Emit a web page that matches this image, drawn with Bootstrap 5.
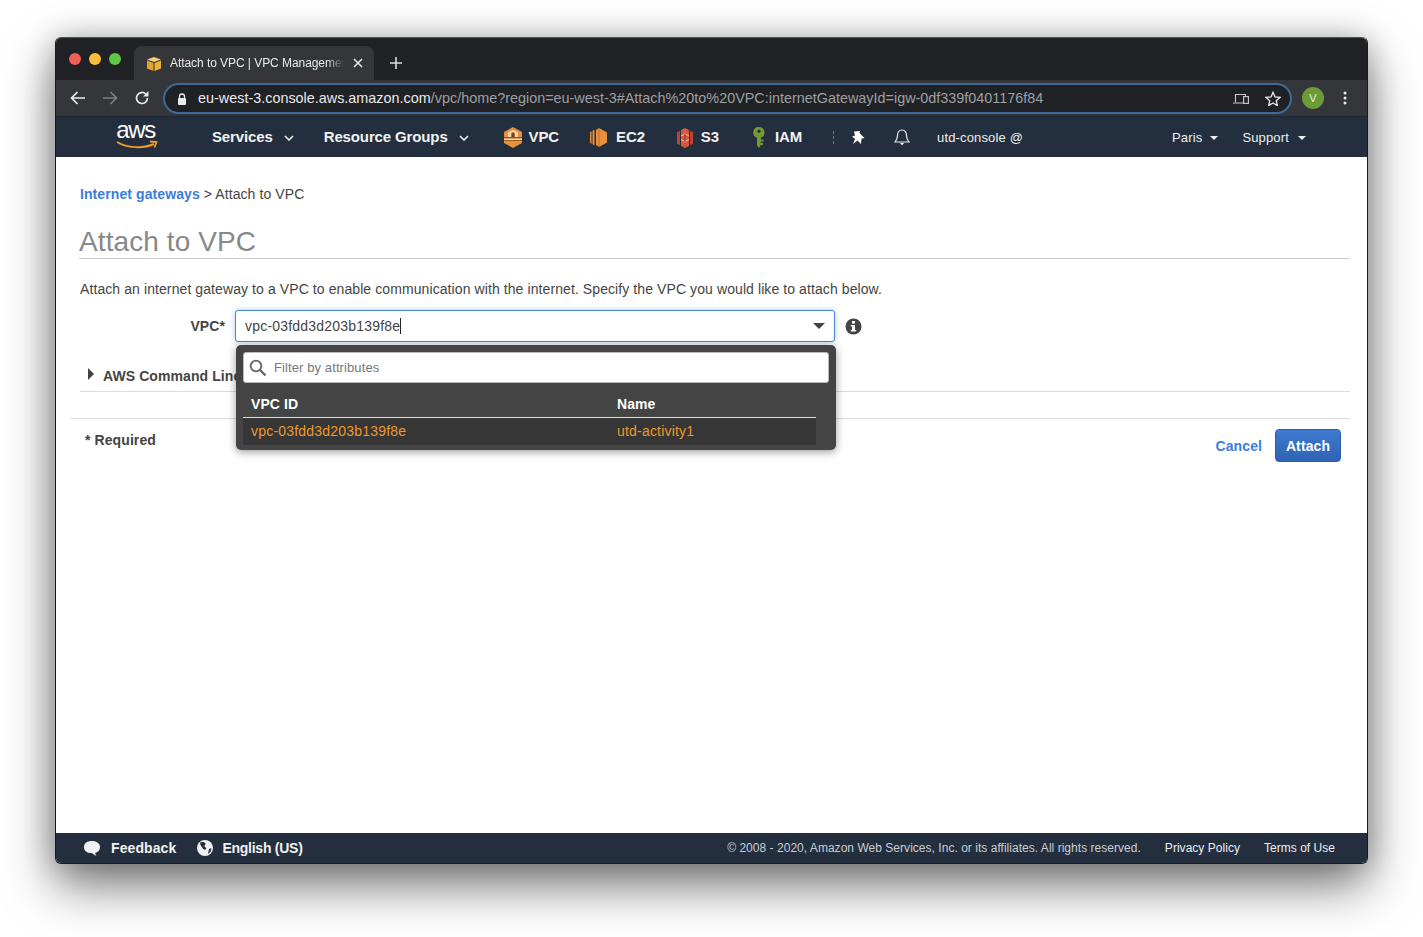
<!DOCTYPE html>
<html lang="en">
<head>
<meta charset="utf-8">
<title>Attach to VPC</title>
<link rel="stylesheet" href="https://cdn.jsdelivr.net/npm/bootstrap@5.3.0/dist/css/bootstrap.min.css">
<style>
html,body{height:937px;overflow:hidden;background:#fff}
body{font-family:"Liberation Sans",Arial,sans-serif;font-size:14px;color:#444;padding:37px 55px 73px 55px}
.win{height:827px;width:1313px;border:1px solid #1a1a1a;border-top-color:#555;border-radius:6px;overflow:hidden;box-shadow:0 22px 50px rgba(0,0,0,.52),0 0 30px rgba(0,0,0,.22);background:#fff}
.tabstrip{height:42px;background:#202124;flex:none}
.dots{padding:15px 0 0 13px;gap:8px;width:78px;flex:none}
.dot{width:12px;height:12px;border-radius:50%;display:block}
.tabx{width:240px;height:34px;margin-top:8px;background:#35363a;border-radius:8px 8px 0 0;padding:0 11px 0 12px;color:#e8eaed;font-size:12px;letter-spacing:-.06px;white-space:nowrap}
.tabtxt{width:174px;overflow:hidden;margin-left:8px;-webkit-mask-image:linear-gradient(90deg,#000 90%,transparent);mask-image:linear-gradient(90deg,#000 90%,transparent)}
.plus{margin:19px 0 0 16px}
.toolbar{height:36px;background:#35363a;flex:none;padding-left:14px}
.omni{width:1129px;height:31px;margin-left:13px;border:2px solid #3d6a99;border-radius:16px;background:#202124;padding:1px 9px 0 12px;font-size:14.4px;color:#9aa0a6;white-space:nowrap}
.omni b{font-weight:400;color:#e8eaed}
.urltxt{margin-left:11px}
.avatar{width:22px;height:22px;border-radius:50%;background:#6b9b37;color:#e8f2d8;font-size:11px;margin-left:10px}
.kebab{margin-left:19px}
.awsbar{height:41px;background:#232f3e;flex:none;color:#eee;white-space:nowrap;border-top:1px solid #1d2733;padding-top:1px}
.awslogo{margin-left:60px;width:42px}
.awsword{font-size:24px;line-height:20px;letter-spacing:-1.4px;color:#fff;margin-top:-6px;text-align:center;padding-right:3px}
.nvi{font-weight:700;font-size:15px;letter-spacing:-.13px;color:#f1f1f1}
.nvs{font-size:13px;letter-spacing:.15px;color:#eee}
.chev1{margin-left:9px}
.chev2{margin-left:9px}
.ngap0{margin-left:54px}
.ngap1{margin-left:26px}
.ngap2{margin-left:31px}
.ngap3{margin-left:7px}
.ngap4{margin-left:31px}
.ngap5{margin-left:9px}
.ngap5b{margin-left:8px}
.ngap6{margin-left:32px}
.ngap7{margin-left:34px}
.ngap8{margin-left:10px}
.sep{margin-left:31px;width:1px;height:13px;border-left:1px dashed #8a7a4a}
.ngap9{margin-left:18px}
.ngap10{margin-left:29px}
.ngap11{margin-left:27px}
.ngap12{margin-left:149px}
.ngap13{margin-left:24px}
.tri8{margin-left:8px}
.tri9{margin-left:9px}
.mainarea{flex:1 1 auto;position:relative;padding:0 17px 0 14px;min-height:0;letter-spacing:.09px}
.crumb{padding:29px 0 0 10px;height:50px;line-height:16px;font-size:14px}
.crumb a,.cancelx{color:#3b7ddd;font-weight:700;text-decoration:none}
.ttl{margin:18px 0 0 9px;font-size:28px;line-height:33px;color:#888;font-weight:400;letter-spacing:.1px;border-bottom:1px solid #ccc;height:34px}
.desc{margin:22px 0 0 10px;line-height:16px;font-size:14px;color:#444}
.frow{margin-top:13px;height:32px}
.lbl{width:165px;text-align:right;font-weight:700;padding-right:10px;font-size:14px}
.vpcbox{width:600px;height:32px;border:1px solid #4a86d8;border-radius:3px;box-shadow:0 0 5px rgba(74,134,216,.45);padding:0 9px 0 9px;font-size:14px;letter-spacing:.2px;color:#444;line-height:30px;background:#fff}
.caret{display:inline-block;width:1px;height:16px;background:#222;vertical-align:-3px}
.tridown{width:0;height:0;border-left:6px solid transparent;border-right:6px solid transparent;border-top:6px solid #444}
.infoi{margin-left:10px}
.cli{margin:18px 0 0 18px;font-weight:700;font-size:14px;line-height:16px;height:31px;white-space:nowrap}
.triright{width:0;height:0;border-top:6px solid transparent;border-bottom:6px solid transparent;border-left:6px solid #444;margin:-3px 9px 0 0}
.rule1{margin-left:10px;border-top:1px solid #ddd;height:1px}
.rule2{margin-top:26px;border-top:1px solid #ddd;height:1px}
.foot{padding:0 9px 0 15px}
.req{font-weight:700;padding-top:13px;line-height:16px}
.cancelx{font-size:14px;margin:11px 13px 0 0}
.attachbtn{margin-top:10px;width:66px;height:33px;padding:1px 0 0;border:1px solid #2b5ea8;border-radius:4px;color:#fff;font-weight:700;font-size:14px;letter-spacing:.1px;background:linear-gradient(#3f7ad0,#2f63b3)}
.ddmenu{position:absolute;left:180px;top:188px;width:600px;height:105px;background:#444;border-radius:5px;box-shadow:0 2px 9px rgba(0,0,0,.4);padding:7px 20px 0 7px;z-index:5}
.filter{width:586px;height:31px;background:#fff;border:1px solid #bbb;border-radius:3px;padding:0 5px;color:#777;font-size:13px;letter-spacing:.1px}
.filtxt{margin-left:7px}
.ddhead{width:573px;margin-top:13px;height:22px;border-bottom:1px solid #ddd;color:#fff;font-weight:700;font-size:14px;line-height:16px;padding-left:8px}
.ddrow{width:573px;height:27px;background:#363636;color:#ec9a2d;font-size:14px;letter-spacing:.2px;line-height:26px;padding-left:8px}
.colid{width:366px}
.awsfoot{height:30px;background:#232f3e;flex:none;color:#eee;font-size:12px;padding:0 32px 0 27px;white-space:nowrap;letter-spacing:.03px}
.awsfoot b{font-size:14px;letter-spacing:0;color:#f1f1f1}
.fbk{margin-left:10px;letter-spacing:.1px!important}
.globe{margin-left:21px}
.lng{margin-left:9px;letter-spacing:-.25px!important}
.copyr{color:#c9ced4;margin-right:24px}
</style>
</head>
<body>
<div class="win d-flex flex-column">
  <div class="tabstrip d-flex">
    <div class="dots d-flex align-items-start">
      <span class="dot" style="background:#ee5f57"></span><span class="dot" style="background:#f8bd3b"></span><span class="dot" style="background:#5fc748"></span>
    </div>
    <div class="tabx d-flex align-items-center">
      <svg width="16" height="15" viewBox="0 0 16 15"><path d="M1 3.500 8 1l7 2.500L8 6z" fill="#f6cf72"/><path d="M1 4.500 7.500 7v8L1 12.500z" fill="#e2a32e"/><path d="M15 4.500 8.500 7v8l6.500-2.500z" fill="#eeb03c"/></svg>
      <span class="tabtxt">Attach to VPC | VPC Management Console</span>
      <svg class="ms-auto" width="10" height="10" viewBox="0 0 10 10"><path d="M1 1l8 8M9 1 1 9" stroke="#e8eaed" stroke-width="1.500"/></svg>
    </div>
    <svg class="plus" width="12" height="12" viewBox="0 0 12 12"><path d="M6 0v12M0 6h12" stroke="#dadce0" stroke-width="1.600"/></svg>
  </div>
  <div class="toolbar d-flex align-items-center">
    <svg width="16" height="14" viewBox="0 0 16 14"><path d="M15 7H2M7.500 1 1.500 7l6 6" fill="none" stroke="#e8eaed" stroke-width="1.700"/></svg>
    <svg class="ms-3" width="16" height="14" viewBox="0 0 16 14"><path d="M1 7h13M8.500 1l6 6-6 6" fill="none" stroke="#7d7f83" stroke-width="1.700"/></svg>
    <svg class="ms-3" width="16" height="16" viewBox="0 0 16 16"><path d="M13.500 8a5.500 5.500 0 1 1-1.700-4L13.500 5.700" fill="none" stroke="#e8eaed" stroke-width="1.700"/><path d="M14.500 1v5.500H9z" fill="#e8eaed"/></svg>
    <div class="omni d-flex align-items-center">
      <svg width="10" height="12" viewBox="0 0 10 12"><path d="M2.500 5V3.500a2.500 2.500 0 0 1 5 0V5" fill="none" stroke="#e8eaed" stroke-width="1.300"/><rect x="1" y="5" width="8" height="7" rx="1" fill="#e8eaed"/></svg>
      <span class="urltxt"><b>eu-west-3.console.aws.amazon.com</b>/vpc/home?region=eu-west-3#Attach%20to%20VPC:internetGatewayId=igw-0df339f0401176f84</span>
      <svg class="ms-auto" width="16" height="12" viewBox="0 0 16 12"><path d="M2.500 9V1.500h10V3M0 10h10" fill="none" stroke="#c4c7c5" stroke-width="1.200"/><rect x="10.600" y="3.600" width="4.800" height="6.800" fill="none" stroke="#c4c7c5" stroke-width="1.200"/></svg>
      <svg class="ms-3" width="16" height="15" viewBox="0 0 16 15"><path d="M8 1.300 10 6l5 .4-3.800 3.300 1.200 4.900L8 12l-4.400 2.600 1.200-4.900L1 6.400 6 6z" fill="none" stroke="#e8eaed" stroke-width="1.300"/></svg>
    </div>
    <div class="avatar d-flex align-items-center justify-content-center">V</div>
    <svg class="kebab" width="4" height="14" viewBox="0 0 4 14"><circle cx="2" cy="2" r="1.500" fill="#e8eaed"/><circle cx="2" cy="7" r="1.500" fill="#e8eaed"/><circle cx="2" cy="12" r="1.500" fill="#e8eaed"/></svg>
  </div>
  <div class="awsbar d-flex align-items-center">
    <div class="awslogo">
      <div class="awsword">aws</div>
      <svg class="d-block" width="42" height="10" viewBox="0 0 42 10"><path d="M1 2c10 6 26 7 37 2" fill="none" stroke="#f09a2e" stroke-width="2"/><path d="M34 1.500l6.500.5-2 5.500" fill="none" stroke="#f09a2e" stroke-width="1.800"/></svg>
    </div>
    <span class="nvi ngap0">Services</span>
    <svg class="chev1" width="16" height="6" viewBox="0 0 12 6"><path d="M1 1l4 4 4-4" fill="none" stroke="#eee" stroke-width="1.600"/></svg>
    <span class="nvi ngap1">Resource Groups</span>
    <svg class="chev2" width="16" height="6" viewBox="0 0 12 6"><path d="M1 1l4 4 4-4" fill="none" stroke="#eee" stroke-width="1.600"/></svg>
    <svg class="ngap2" width="18" height="21" viewBox="0 0 18 21"><path d="M9 0 18 5v11l-9 5-9-5V5z" fill="#e8913f"/><path d="M4 5.500 9 3l5 2.500V10H11V7H7v3H4z" fill="#fbd9b0"/><path d="M7.500 5.500h3V10h-3z" fill="#7a4414"/><path d="M0 10h18v1.500H0z" fill="#8a4f1a"/><path d="M0 11.500h18V13H0z" fill="#f8d6ad"/><path d="M0 13h18v1H0z" fill="#9c5a1e"/></svg>
    <span class="nvi ngap3">VPC</span>
    <svg class="ngap4" width="17" height="19" viewBox="0 0 17 19"><path d="M6 2 9 0l8 4.500v10L9 19l-3-2z" fill="#e8903c"/><path d="M0 4l1.500-.8v12.600L0 15zM2.500 2.800 4.500 1.700v15.600l-2-1.100z" fill="#e8903c"/><path d="M9 0v19" stroke="#b9631f" stroke-width=".8"/></svg>
    <span class="nvi ngap5">EC2</span>
    <svg class="ngap6" width="16" height="20" viewBox="0 0 16 20"><path d="M0 4l3-1v14l-3-1zM16 4l-3-1v14l3-1z" fill="#c1432f"/><path d="M4 2 8 0l4 2v16l-4 2-4-2z" fill="#d6593f"/><path d="M4 8l4-2 4 2M4 11.500l4 2 4-2" fill="none" stroke="#f3c0b0" stroke-width="1"/><path d="M8 6v8" stroke="#8f2f20" stroke-width="1"/></svg>
    <span class="nvi ngap5b">S3</span>
    <svg class="ngap7" width="12" height="21" viewBox="0 0 12 21"><path d="M6 0a5.500 5.500 0 0 1 1.800 10.700V12.500H10.500v2H7.800v1.500H10v2H7.800L6 21l-2-2.500V10.700A5.500 5.500 0 0 1 6 0zm0 2.500a1.700 1.700 0 1 0 0 3.400 1.700 1.700 0 0 0 0-3.400z" fill="#759a35"/></svg>
    <span class="nvi ngap8">IAM</span>
    <span class="sep"></span>
    <svg class="ngap9" width="13" height="14" viewBox="0 0 13 14"><path d="M2 .5 8 0l-.5 2L12.500 7l-3 .8L9 13 5.500 9.500 1 13l2-5L0 5.500l3-1z" fill="#fff"/></svg>
    <svg class="ngap10" width="16" height="17" viewBox="0 0 16 17"><path d="M8 1c-3 0-4.500 2.400-4.500 5.500 0 3-1 4.500-2.500 6.500h14c-1.500-2-2.500-3.500-2.500-6.500C12.500 3.400 11 1 8 1z" fill="none" stroke="#eee" stroke-width="1.200"/><path d="M6 14h4l-2 2.500z" fill="#eee"/></svg>
    <span class="nvs ngap11">utd-console @</span>
    <span class="nvs ngap12">Paris</span>
    <svg class="tri8" width="8" height="4" viewBox="0 0 8 4"><path d="M0 0h8L4 4z" fill="#eee"/></svg>
    <span class="nvs ngap13">Support</span>
    <svg class="tri9" width="8" height="4" viewBox="0 0 8 4"><path d="M0 0h8L4 4z" fill="#eee"/></svg>
  </div>
  <div class="mainarea">
    <div class="crumb"><a href="#">Internet gateways</a> &gt; Attach to VPC</div>
    <h1 class="ttl">Attach to VPC</h1>
    <p class="desc mb-0">Attach an internet gateway to a VPC to enable communication with the internet. Specify the VPC you would like to attach below.</p>
    <div class="frow d-flex align-items-center">
      <div class="lbl">VPC*</div>
      <div class="vpcbox d-flex align-items-center justify-content-between"><span>vpc-03fdd3d203b139f8e<span class="caret"></span></span><span class="tridown"></span></div>
      <svg class="infoi" width="17" height="17" viewBox="0 0 17 17"><circle cx="8.500" cy="8.500" r="8" fill="#444"/><rect x="7" y="3" width="3" height="2.600" fill="#fff"/><path d="M5.800 7h4.200v5h1.200v1.600H5.800V12H7V8.600H5.800z" fill="#fff"/></svg>
    </div>
    <div class="cli d-flex align-items-center"><span class="triright"></span>AWS Command Line</div>
    <div class="rule1"></div>
    <div class="rule2"></div>
    <div class="foot d-flex justify-content-between align-items-start">
      <div class="req">* Required</div>
      <div class="d-flex align-items-center"><a class="cancelx" href="#">Cancel</a><button class="attachbtn" type="button">Attach</button></div>
    </div>
    <div class="ddmenu">
      <div class="filter d-flex align-items-center">
        <svg width="18" height="18" viewBox="0 0 18 18"><circle cx="7" cy="7" r="5.300" fill="none" stroke="#666" stroke-width="1.800"/><path d="M11 11l5.500 5.500" stroke="#666" stroke-width="2.400"/></svg>
        <span class="filtxt">Filter by attributes</span>
      </div>
      <div class="ddhead d-flex"><div class="colid">VPC ID</div><div>Name</div></div>
      <div class="ddrow d-flex"><div class="colid">vpc-03fdd3d203b139f8e</div><div>utd-activity1</div></div>
    </div>
  </div>
  <div class="awsfoot d-flex align-items-center">
    <svg width="18" height="17" viewBox="0 0 18 17"><path d="M9 1c4.700 0 8 2.500 8 6s-2.500 5.500-5 6l1.500 3-5-3C4 13 1 11 1 7s3.300-6 8-6z" fill="#f1f1f1"/></svg>
    <b class="fbk">Feedback</b>
    <svg class="globe" width="16" height="16" viewBox="0 0 16 16"><circle cx="8" cy="8" r="8" fill="#f1f1f1"/><path d="M3 2.500 C5 1.500 8 2 8.500 3.500S7 5.500 7.500 6.500 10 7.500 9 9s-2.500.5-3.500-1S3 5 3 2.500zM12 9l2.500-1-1 4-2.500 2z" fill="#232f3e"/></svg>
    <b class="lng">English (US)</b>
    <span class="copyr ms-auto">© 2008 - 2020, Amazon Web Services, Inc. or its affiliates. All rights reserved.</span>
    <span class="me-4">Privacy Policy</span>
    <span>Terms of Use</span>
  </div>
</div>
<script src="https://cdn.jsdelivr.net/npm/bootstrap@5.3.0/dist/js/bootstrap.bundle.min.js"></script>
</body>
</html>
